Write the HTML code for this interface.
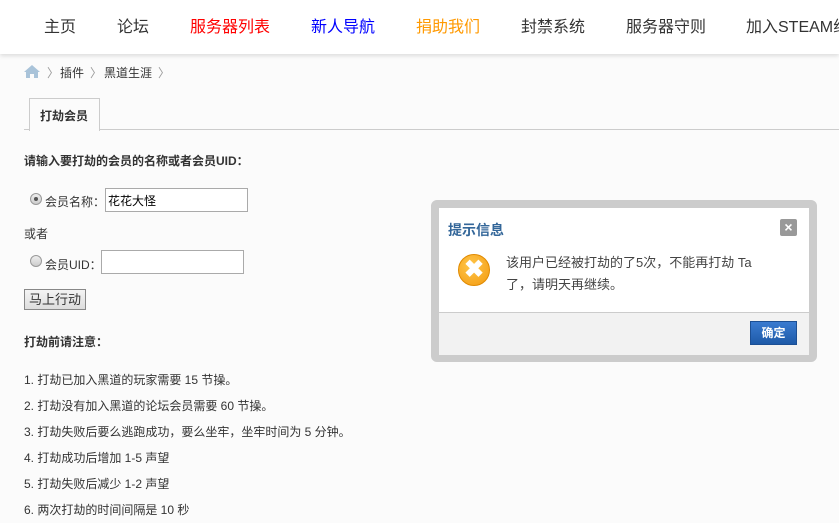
<!DOCTYPE html><html><head><meta charset="utf-8"><style>
body{margin:0;width:839px;height:510px;overflow:hidden;background:#fbfbfb;font-family:"Liberation Sans","Noto Sans CJK SC",sans-serif;color:#333;font-size:12px;position:relative}
.hd{position:absolute;left:0;top:0;width:839px;height:54px;background:#fff;box-shadow:0 2px 4px rgba(0,0,0,.12)}
.hd span{position:absolute;top:13px;font-size:16px;white-space:nowrap;color:#333}
.a{position:absolute;white-space:nowrap}
input.t{position:absolute;height:22px;border:1px solid #aaa;background:#fff;box-sizing:border-box;font-size:12px;padding:0 2px;font-family:inherit}
.rad{position:absolute;width:10px;height:10px;border-radius:50%;border:1px solid #999;background:linear-gradient(#eee,#ccc)}
</style></head><body>
<div class="hd">
<span style="left:44px">主页</span><span style="left:117px">论坛</span><span style="left:190px;color:#f00">服务器列表</span><span style="left:311px;color:#00f">新人导航</span><span style="left:416px;color:#f90">捐助我们</span><span style="left:521px">封禁系统</span><span style="left:626px">服务器守则</span><span style="left:746px">加入STEAM组</span>
</div>
<svg class="a" style="left:24px;top:65px" width="16" height="13" viewBox="0 0 16 13"><path d="M8 0L0 7h2v6h4V9h4v4h4V7h2z" fill="#a9c3d9"/></svg>
<div class="a" style="left:47px;top:64px;color:#999">〉</div>
<div class="a" style="left:60px;top:64px">插件</div>
<div class="a" style="left:90px;top:64px;color:#999">〉</div>
<div class="a" style="left:104px;top:64px">黑道生涯</div>
<div class="a" style="left:158px;top:64px;color:#999">〉</div>
<div class="a" style="left:24px;top:129px;width:815px;border-top:1px solid #ccc"></div>
<div class="a" style="left:29px;top:98px;width:69px;height:32px;border:1px solid #ccc;border-bottom:none;background:#fbfbfb"></div>
<div class="a" style="left:40px;top:107px;font-weight:bold">打劫会员</div>
<div class="a" style="left:24px;top:152px;font-weight:bold">请输入要打劫的会员的名称或者会员UID：</div>
<div class="rad" style="left:30px;top:193px"><div style="width:4px;height:4px;background:#555;border-radius:50%;margin:3px"></div></div>
<div class="a" style="left:45px;top:193px">会员名称：</div>
<input class="t" style="left:105px;top:188px;width:143px;height:24px" value="花花大怪">
<div class="a" style="left:24px;top:225px">或者</div>
<div class="rad" style="left:30px;top:255px"></div>
<div class="a" style="left:45px;top:256px">会员UID：</div>
<input class="t" style="left:101px;top:250px;width:143px;height:24px">
<div class="a" style="left:24px;top:289px;width:62px;height:21px;border:1px solid #888;background:linear-gradient(#f4f4f4,#ddd);box-sizing:border-box;text-align:center;line-height:19px;font-size:13px">马上行动</div>
<div class="a" style="left:24px;top:333px;font-weight:bold">打劫前请注意：</div>
<div class="a" style="left:24px;top:367px;line-height:26px">1. 打劫已加入黑道的玩家需要 15 节操。<br>2. 打劫没有加入黑道的论坛会员需要 60 节操。<br>3. 打劫失败后要么逃跑成功，要么坐牢，坐牢时间为 5 分钟。<br>4. 打劫成功后增加 1-5 声望<br>5. 打劫失败后减少 1-2 声望<br>6. 两次打劫的时间间隔是 10 秒</div>
<div class="a" style="left:431px;top:200px;width:370px;height:146px;border:8px solid #ccc;border-radius:6px;background:#fff">
<div class="a" style="left:9px;top:12px;color:#336699;font-weight:bold;font-size:14px">提示信息</div>
<div class="a" style="left:341px;top:11px;width:17px;height:17px;background:#999;border-radius:2px;color:#fff;font-weight:bold;text-align:center;line-height:17px;font-size:14px">×</div>
<div class="a" style="left:19px;top:46px;width:30px;height:30px;border-radius:50%;background:radial-gradient(circle at 40% 35%,#ffc64a,#f39a10);border:1px solid #e08a00;color:#fff;text-align:center;line-height:30px;font-size:24px;font-weight:bold">✖</div>
<div class="a" style="left:67px;top:44px;font-size:13px;line-height:22px;color:#444">该用户已经被打劫的了5次，不能再打劫 Ta<br>了，请明天再继续。</div>
<div class="a" style="left:0;top:104px;width:370px;height:42px;background:#f2f2f2;border-top:1px solid #ccc"></div>
<div class="a" style="left:311px;top:113px;width:45px;height:22px;background:linear-gradient(#3a7bd0,#1e5aa8);border:1px solid #1c4f94;color:#fff;font-weight:bold;text-align:center;line-height:22px">确定</div>
</div>
</body></html>
